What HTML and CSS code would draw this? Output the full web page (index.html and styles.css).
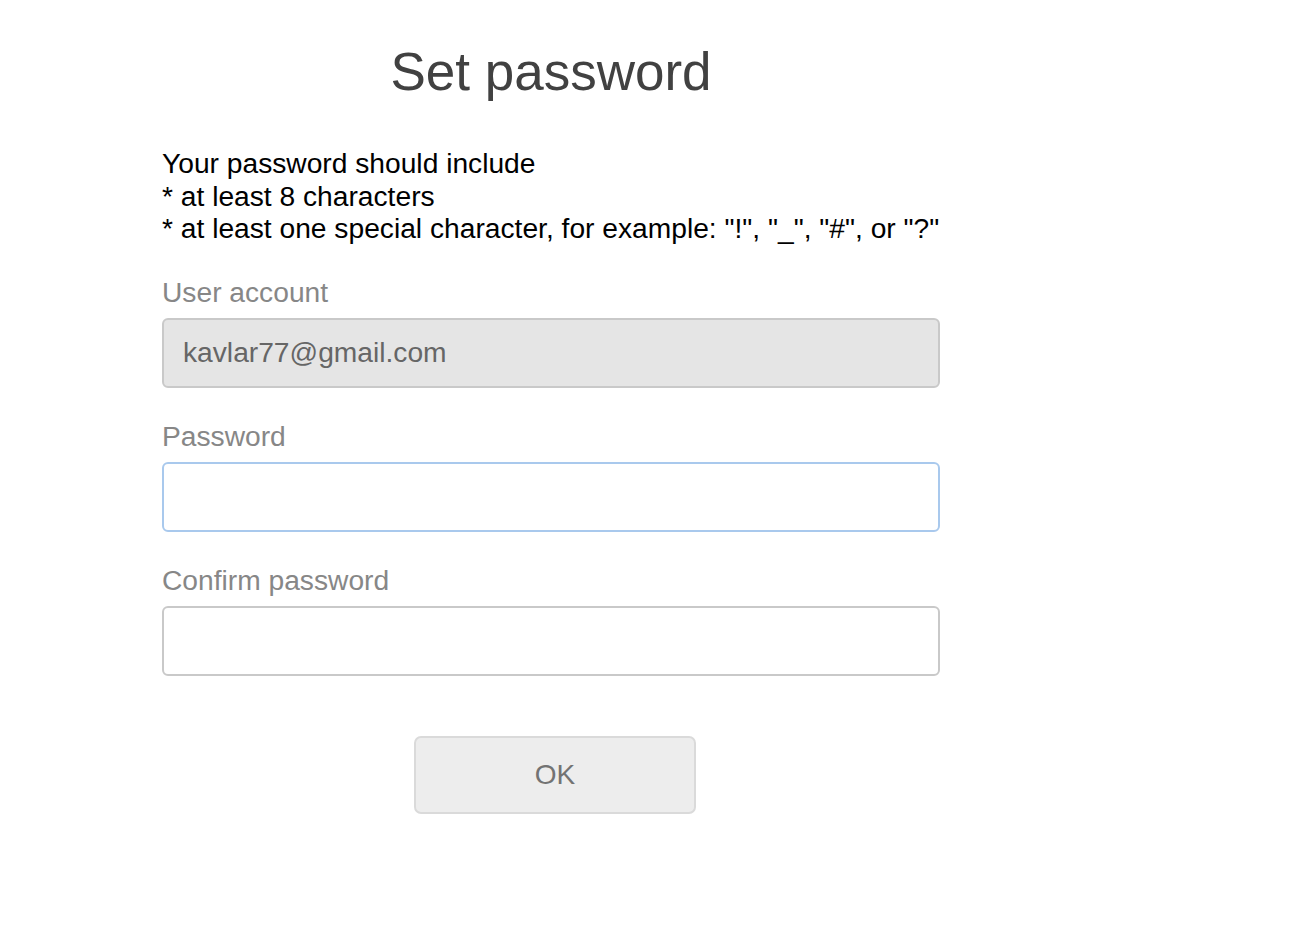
FILE: index.html
```html
<!DOCTYPE html>
<html lang="en">
<head>
<meta charset="utf-8">
<title>Set password</title>
<link rel="stylesheet" href="styles.css">
</head>
<body>
<main class="page">
  <h1 class="title">Set password</h1>
  <p class="rules">Your password should include<br>* at least 8 characters<br>* at least one special character, for example: "!", "_", "#", or "?"</p>
  <form class="form">
    <div class="field">
      <label class="label" for="account">User account</label>
      <input class="input input-disabled" id="account" type="text" value="kavlar77@gmail.com" disabled>
    </div>
    <div class="field">
      <label class="label" for="pw">Password</label>
      <input class="input input-focus" id="pw" type="password">
    </div>
    <div class="field">
      <label class="label" for="pw2">Confirm password</label>
      <input class="input" id="pw2" type="password">
    </div>
    <div class="actions">
      <button class="btn" type="button">OK</button>
    </div>
  </form>
</main>
</body>
</html>
```
FILE: styles.css
```css
html, body {
  margin: 0;
  padding: 0;
  background: #ffffff;
}
body {
  font-family: "Liberation Sans", Arial, Helvetica, sans-serif;
}
.page {
  width: 778px;
  margin-left: 162px;
  padding-top: 42px;
  display: flex;
  flex-direction: column;
}
.title {
  margin: 0;
  font-size: 53px;
  font-weight: normal;
  line-height: 60px;
  color: #414141;
  text-align: center;
}
.rules {
  margin: 45px 0 0 0;
  font-size: 28.2px;
  line-height: 32.5px;
  color: #000000;
}
.form {
  display: flex;
  flex-direction: column;
  gap: 32px;
  margin-top: 31px;
}
.field {
  display: flex;
  flex-direction: column;
  gap: 10px;
}
.label {
  font-size: 28.2px;
  line-height: 32px;
  color: #878787;
}
.input {
  box-sizing: border-box;
  width: 778px;
  height: 70px;
  border: 2px solid #c9c9c9;
  border-radius: 6px;
  background: #ffffff;
  padding: 0 19px;
  font-family: inherit;
  font-size: 28.2px;
  color: #666666;
  outline: none;
  margin: 0;
}
.input-disabled {
  background: #e5e5e5;
  color: #666666;
  -webkit-text-fill-color: #666666;
  opacity: 1;
}
.input-focus {
  border-color: #a9c9ed;
}
.actions {
  margin-top: 28px;
  display: flex;
}
.btn {
  box-sizing: border-box;
  margin-left: 252px;
  width: 282px;
  height: 78px;
  border: 2px solid #dadada;
  border-radius: 7px;
  background: #ededed;
  font-family: inherit;
  font-size: 28px;
  color: #737373;
  padding: 0;
}
```
